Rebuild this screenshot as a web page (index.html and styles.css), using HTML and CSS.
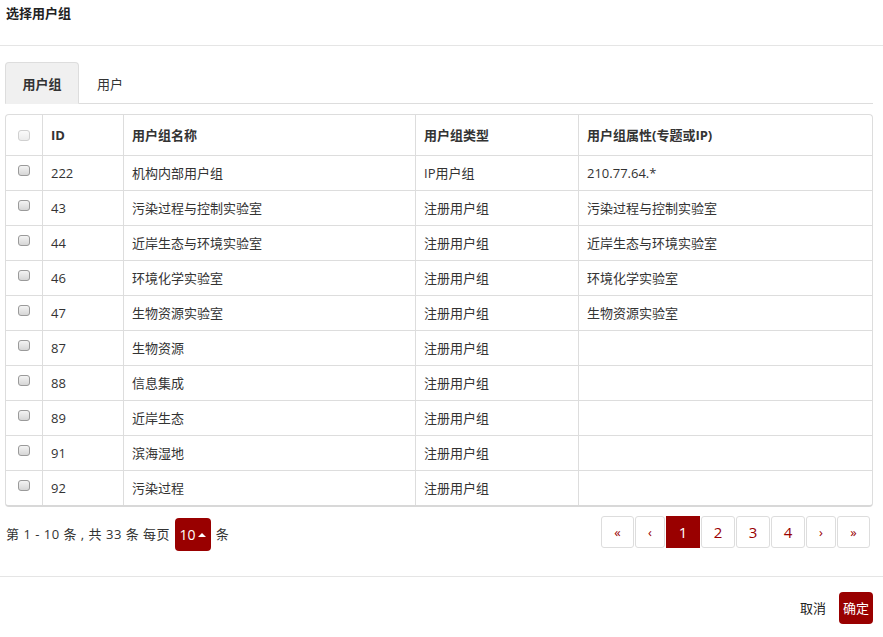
FILE: index.html
```html
<!DOCTYPE html>
<html lang="zh-CN">
<head>
    <meta charset="UTF-8">
    <title>选择用户组</title>
    <link rel="stylesheet" href="styles.css">
</head>
<body>
    <div class="modal">
        <div class="modal-header">
            <h4>选择用户组</h4>
        </div>
        <div class="modal-body">
            <ul class="tabs">
                <li class="active">用户组</li>
                <li>用户</li>
            </ul>
            <div class="table-box">
                <table id="groupTable">
                    <thead>
                        <tr>
                            <th class="col-chk"><input type="checkbox" class="chk" disabled></th>
                            <th class="col-id">ID</th>
                            <th class="col-name">用户组名称</th>
                            <th class="col-type">用户组类型</th>
                            <th>用户组属性(专题或IP)</th>
                        </tr>
                    </thead>
                    <tbody></tbody>
                </table>
            </div>
        </div>
        <div class="pager-row">
            <div class="page-info">第 1 - 10 条 , 共 33 条 每页 <span class="size-btn">10<span class="caret"></span></span> 条</div>
            <ul class="pagination">
                <li class="edge">«</li>
                <li class="arrow">‹</li>
                <li class="num active">1</li>
                <li class="num">2</li>
                <li class="num">3</li>
                <li class="num">4</li>
                <li class="arrow">›</li>
                <li class="edge">»</li>
            </ul>
        </div>
        <div class="modal-footer">
            <span class="btn-cancel">取消</span>
            <span class="btn-ok">确定</span>
        </div>
    </div>

    <script>
        var groups = [
            ['222', '机构内部用户组', 'IP用户组', '210.77.64.*'],
            ['43', '污染过程与控制实验室', '注册用户组', '污染过程与控制实验室'],
            ['44', '近岸生态与环境实验室', '注册用户组', '近岸生态与环境实验室'],
            ['46', '环境化学实验室', '注册用户组', '环境化学实验室'],
            ['47', '生物资源实验室', '注册用户组', '生物资源实验室'],
            ['87', '生物资源', '注册用户组', ''],
            ['88', '信息集成', '注册用户组', ''],
            ['89', '近岸生态', '注册用户组', ''],
            ['91', '滨海湿地', '注册用户组', ''],
            ['92', '污染过程', '注册用户组', '']
        ];

        var tbody = document.querySelector('#groupTable tbody');
        groups.forEach(function (g) {
            var row = tbody.insertRow(-1);
            row.insertCell(0).innerHTML = '<input type="checkbox" class="chk">';
            row.cells[0].className = 'col-chk';
            for (var i = 0; i < g.length; i++) {
                row.insertCell(i + 1).textContent = g[i];
            }
        });
    </script>
</body>
</html>
```

FILE: styles.css
```css
body {
    margin: 0;
    font-family: "Open Sans", "Noto Sans CJK SC", sans-serif;
    font-size: 13px;
    line-height: 20px;
    color: #333;
    background: #fff;
}
.modal-header {
    height: 46px;
    border-bottom: 1px solid #e5e5e5;
    box-sizing: border-box;
}
.modal-header h4 {
    margin: 0;
    padding-left: 6px;
    font-size: 13px;
    font-weight: bold;
    line-height: 26px;
    color: #222;
}
.modal-body {
    padding: 16px 10px 0 5px;
}
.tabs {
    list-style: none;
    margin: 0;
    padding: 0;
    display: flex;
    border-bottom: 1px solid #ddd;
}
.tabs li {
    height: 42px;
    line-height: 42px;
    padding: 0 17px;
    box-sizing: border-box;
    border: 1px solid transparent;
    border-radius: 4px 4px 0 0;
    margin-bottom: -1px;
}
.tabs li.active {
    width: 74px;
    text-align: center;
    padding: 0;
    font-weight: bold;
    background: #f0f0f0;
    border-color: #ddd #ddd transparent;
}
.table-box {
    margin-top: 10px;
    border: 1px solid #ddd;
    border-bottom: 2px solid #d8d8d8;
    border-radius: 4px;
    overflow: hidden;
}
table {
    width: 100%;
    border-collapse: collapse;
    table-layout: fixed;
}
th, td {
    text-align: left;
    padding: 0 8px;
    border-left: 1px solid #ddd;
    border-top: 1px solid #ddd;
    white-space: nowrap;
}
th:first-child, td:first-child {
    border-left: none;
}
thead th {
    border-top: none;
    height: 40px;
    font-weight: bold;
}
tbody td {
    height: 34px;
}
.col-chk {
    width: 36px;
    padding: 0;
    vertical-align: top;
}
.col-id {
    width: 64px;
}
.col-name {
    width: 275px;
}
.col-type {
    width: 146px;
}
.chk { /* 灰色老式复选框 */
    -webkit-appearance: none;
    appearance: none;
    display: block;
    width: 12px;
    height: 11px;
    margin: 9px auto 0;
    border: 1px solid #9a9a9a;
    border-radius: 3px;
    background: linear-gradient(#f4f4f4, #d6d6d6);
}
thead .chk {
    margin-top: 15px;
    border-color: #d0d0d0;
    background: linear-gradient(#fafafa, #ececec);
}
.pager-row {
    display: flex;
    justify-content: space-between;
    align-items: flex-start;
    padding: 9px 13px 25px 6px;
    border-bottom: 1px solid #e5e5e5;
}
.page-info {
    margin-top: 2px;
    line-height: 33px;
    white-space: nowrap;
    letter-spacing: 0.5px;
}
.size-btn {
    display: inline-block;
    vertical-align: top;
    width: 36px;
    height: 33px;
    line-height: 33px;
    margin: 0 1px;
    text-align: center;
    border-radius: 4px;
    background: #990000;
    color: #fff;
    font-size: 14px;
    letter-spacing: 0;
}
.caret {
    display: inline-block;
    vertical-align: middle;
    width: 0;
    height: 0;
    margin-left: 3px;
    margin-top: -3px;
    border-left: 4px solid transparent;
    border-right: 4px solid transparent;
    border-bottom: 4px solid #fff;
}
.pagination {
    list-style: none;
    margin: 0;
    padding: 0;
    display: flex;
    gap: 1px;
}
.pagination li {
    height: 32px;
    line-height: 30px;
    box-sizing: border-box;
    border: 1px solid #ddd;
    border-radius: 3px;
    text-align: center;
    color: #990000;
    font-size: 14px;
}
.pagination .edge {
    width: 33px;
    font-size: 13px;
}
.pagination .arrow {
    width: 30px;
    font-size: 13px;
}
.pagination .num {
    width: 34px;
    font-size: 15px;
}
.pagination li.active {
    background: #990000;
    border-color: #990000;
    color: #fff;
    border-radius: 0;
}
.modal-footer {
    display: flex;
    justify-content: flex-end;
    align-items: center;
    padding: 15px 10px 0 0;
}
.btn-cancel {
    margin-right: 13px;
    color: #222;
}
.btn-ok {
    width: 34px;
    height: 32px;
    line-height: 32px;
    text-align: center;
    border-radius: 4px;
    background: #990000;
    color: #fff;
}
```
